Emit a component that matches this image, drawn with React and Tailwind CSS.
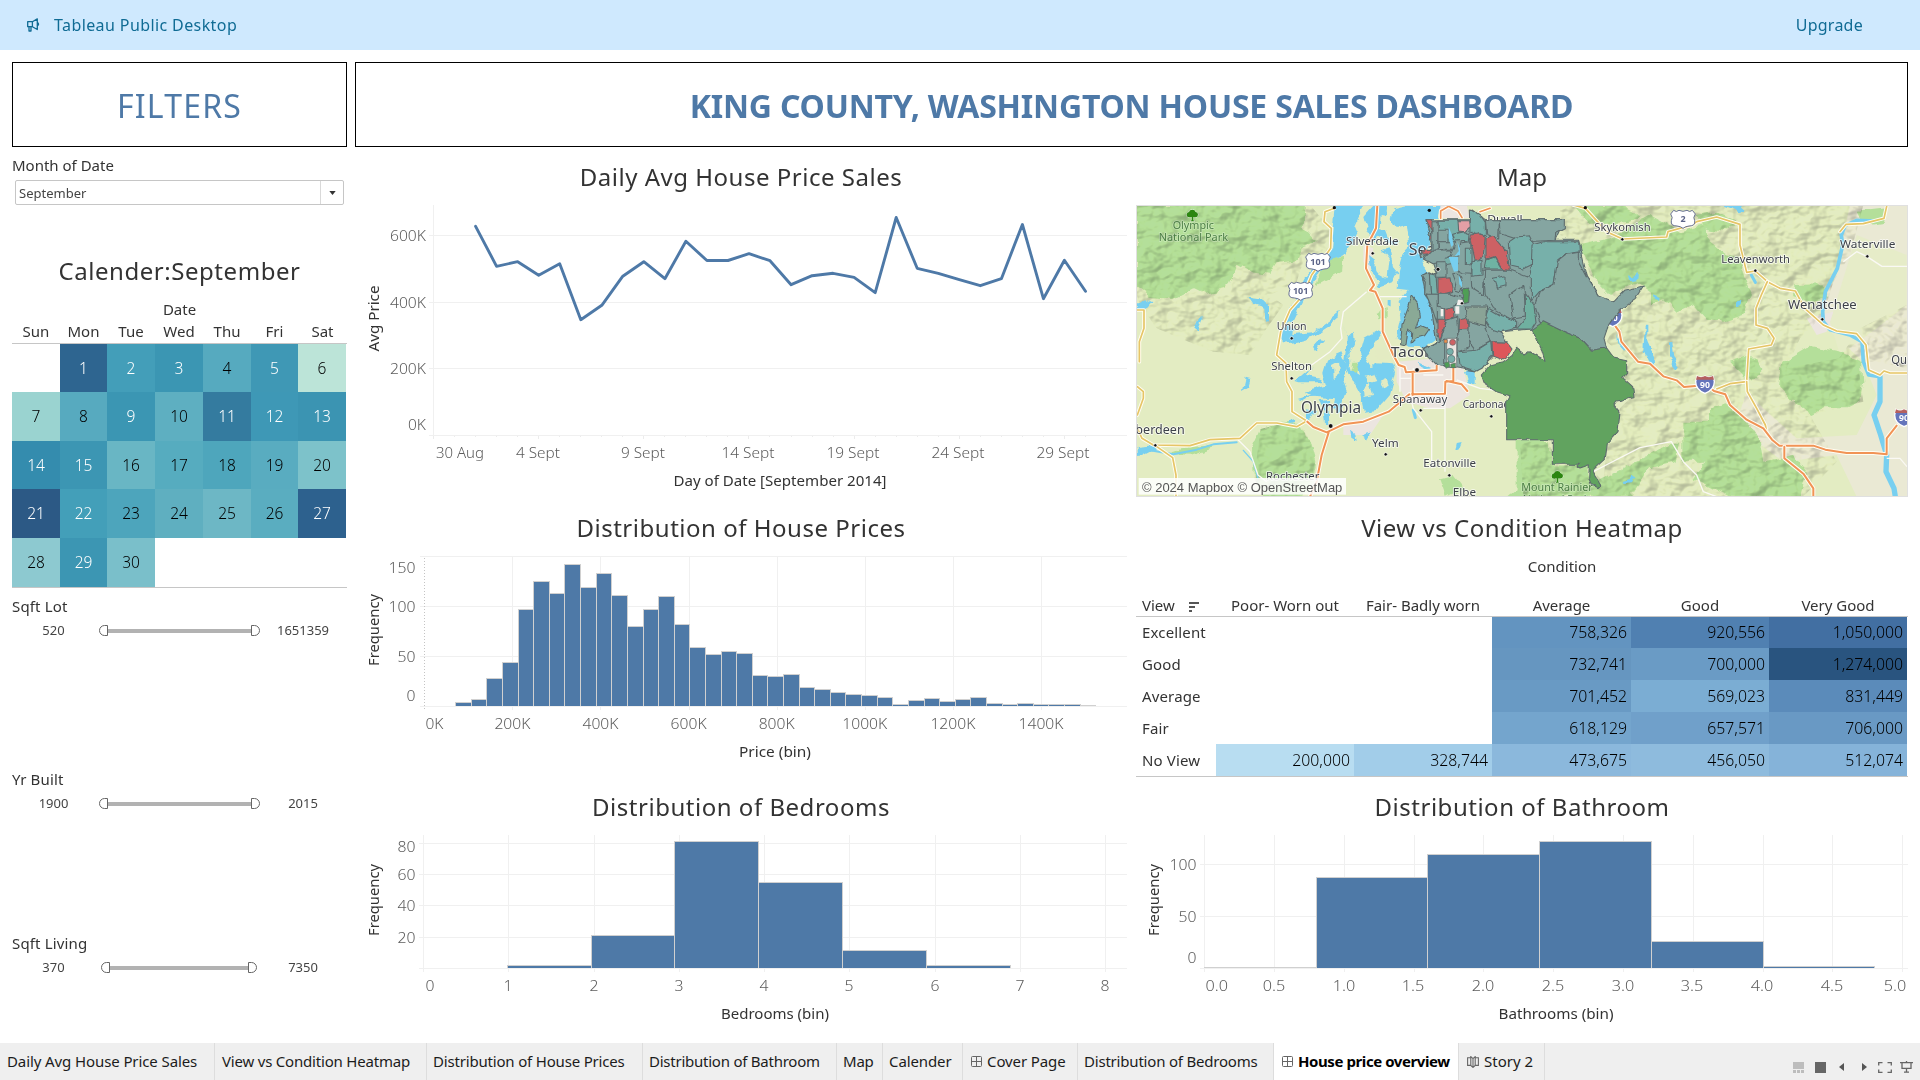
import React from "react";

const WEEKDAYS = ["Sun", "Mon", "Tue", "Wed", "Thu", "Fri", "Sat"];

const DAYS = [
  null,
  [1, "#2e6590", 1], [2, "#439eb9", 1], [3, "#3b96b3", 1], [4, "#56aabf", 0], [5, "#3f98b5", 1], [6, "#bce4d8", 0],
  [7, "#9ad3d0", 0], [8, "#57aabf", 0], [9, "#3b96b3", 1], [10, "#5eafc1", 0], [11, "#347b9f", 1], [12, "#3e98b6", 1], [13, "#3b94b2", 1],
  [14, "#348cae", 1], [15, "#3c96b3", 1], [16, "#69b6c4", 0], [17, "#56acbf", 0], [18, "#4ea6bc", 0], [19, "#59acc0", 0], [20, "#7dc2ca", 0],
  [21, "#2c5985", 1], [22, "#439fb9", 1], [23, "#4da5bc", 0], [24, "#5fafc0", 0], [25, "#6db7c5", 0], [26, "#5aadc0", 0], [27, "#2d618e", 1],
  [28, "#8dc9d0", 0], [29, "#3c96b3", 1], [30, "#7abfca", 0],
];

const HEAT = [
  ["Excellent", null, null, ["758,326", "#6394c0"], ["920,556", "#5080b1"], ["1,050,000", "#426fa2"]],
  ["Good", null, null, ["732,741", "#6696c0"], ["700,000", "#6a9bc5"], ["1,274,000", "#29547f"]],
  ["Average", null, null, ["701,452", "#699ac4"], ["569,023", "#7badd3"], ["831,449", "#5b8bba"]],
  ["Fair", null, null, ["618,129", "#74a5cd"], ["657,571", "#70a0ca"], ["706,000", "#6999c4"]],
  ["No View", ["200,000", "#b8ddf1"], ["328,744", "#a2cde9"], ["473,675", "#8bb8dc"], ["456,050", "#8ebbdd"], ["512,074", "#85b3d9"]],
];

const PRICE_LINE = [
  226.3, 266.3, 261.7, 275.2, 263.7, 319.7, 305.3, 276.2, 261.7, 278.7, 241.3, 260.5, 260.5, 253.7, 260.7, 284.7,
  275.7, 273.3, 277.3, 292.7, 217.5, 268.3, 273.3, 279.7, 285.7, 278.7, 224.5, 298.7, 260.3, 291.3,
];

const PRICE_TOPS = [
  607, 596, 535, 487, 328, 244, 280, 193, 262, 220, 286, 379, 328, 289, 373, 442, 463, 454, 460, 526, 529, 523, 562,
  568, 577, 583, 586, 592, 613, 601, 595, 604, 598, 592, 610, 613, 610, 613, 613, 613, 616,
].map((v) => 500 + v / 3);

const snap = (v) => Math.round(v) + 0.5;

/* ---------- chart primitives ---------- */

function Grid({ xs = [], ys = [], left, right, top, bottom, axisLeft }) {
  return (
    <g stroke="#f0f0f0" strokeWidth="1.4" shapeRendering="crispEdges">
      {ys.map((y) => <line key={"y" + y} x1={left} x2={right} y1={y} y2={y} />)}
      {xs.map((x) => <line key={"x" + x} x1={x} x2={x} y1={top} y2={bottom + 4} />)}
      {axisLeft && <line x1={axisLeft} x2={axisLeft} y1={top} y2={bottom + 4} />}
    </g>
  );
}

function Tick({ x, y, w, anchor = "middle", children }) {
  return (
    <text x={x} y={y} textAnchor={anchor} textLength={w} lengthAdjust="spacingAndGlyphs" className="fill-[#5c5c5c] text-[15px] font-light">
      {children}
    </text>
  );
}

function AxisTitle({ x, y, w, vertical, children }) {
  return (
    <text
      x={x}
      y={y}
      textAnchor="middle"
      textLength={w}
      lengthAdjust="spacingAndGlyphs"
      transform={vertical ? `rotate(-90 ${x} ${y})` : undefined}
      className="fill-[#333333] text-[15px]"
    >
      {children}
    </text>
  );
}

function Bars({ edges, tops, base }) {
  return (
    <g shapeRendering="crispEdges">
      {tops.map((t, i) => {
        const x0 = Math.round(edges[i]);
        const x1 = Math.round(edges[i + 1]);
        const y = Math.round(t);
        return (
          <g key={i}>
            <rect x={x0} y={y} width={x1 - x0 + 1} height={base - y} fill="#d0d0d0" />
            <rect x={x0 + 1} y={y + 1} width={x1 - x0 - 1} height={Math.max(0, base - y - 1)} fill="#4e79a7" />
          </g>
        );
      })}
    </g>
  );
}

function Panel({ title, tracking = "tracking-[0.52px]", children }) {
  return (
    <section className="flex flex-col">
      <h2 className="mb-[7px] flex h-[43px] items-center justify-center whitespace-nowrap text-[24px] leading-[43px] text-[#333333]">
        <span className={tracking}>{title}</span>
      </h2>
      {children}
    </section>
  );
}

/* ---------- charts ---------- */

function DailyPriceChart() {
  const pts = PRICE_LINE.map((y, i) => `${(475.6 + i * 21.03).toFixed(1)},${y}`).join(" ");
  return (
    <svg viewBox="355 205 772 301" className="h-[301px] w-[772px]">
      <Grid left={429} right={1127} top={205} bottom={435} ys={[235.5, 302.5, 368.5, 435.5]} axisLeft={433.5} />
      <g stroke="#ececec" shapeRendering="crispEdges">
        {Array.from({ length: 32 }, (_, i) => {
          const x = snap(433 + i * 21.03);
          return <line key={i} x1={x} x2={x} y1="436" y2={i % 5 === 0 ? 439 : 437} />;
        })}
      </g>
      <polyline points={pts} fill="none" stroke="#4e79a7" strokeWidth="2.9" strokeLinejoin="round" strokeLinecap="round" />
      <Tick x={426} y={240.5} w={36} anchor="end">600K</Tick>
      <Tick x={426} y={307.5} w={36} anchor="end">400K</Tick>
      <Tick x={426} y={373.5} w={36} anchor="end">200K</Tick>
      <Tick x={426} y={430} w={18} anchor="end">0K</Tick>
      <Tick x={460} y={458} w={48}>30 Aug</Tick>
      <Tick x={538} y={458} w={44}>4 Sept</Tick>
      <Tick x={643} y={458} w={44}>9 Sept</Tick>
      <Tick x={748} y={458} w={53}>14 Sept</Tick>
      <Tick x={853} y={458} w={53}>19 Sept</Tick>
      <Tick x={958} y={458} w={53}>24 Sept</Tick>
      <Tick x={1063} y={458} w={53}>29 Sept</Tick>
      <AxisTitle x={780} y={486} w={213}>Day of Date [September 2014]</AxisTitle>
      <AxisTitle x={378.5} y={318.5} w={66} vertical>Avg Price</AxisTitle>
    </svg>
  );
}

function HousePriceHistogram() {
  const edges = Array.from({ length: 42 }, (_, i) => 455.2 + i * 15.61);
  const xs = Array.from({ length: 7 }, (_, i) => snap(512.3 + i * 88.1));
  return (
    <svg viewBox="355 556 772 229" className="h-[229px] w-[772px]">
      <Grid left={420} right={1127} top={556} bottom={706} ys={[556.5, 606.5, 656.5, 706.5]} xs={xs} />
      <line x1="424.5" x2="424.5" y1="558" y2="710" stroke="#c4c4c4" strokeDasharray="1 2" shapeRendering="crispEdges" />
      <Bars edges={edges} tops={PRICE_TOPS} base={706} />
      <Tick x={415.5} y={572.5} w={27} anchor="end">150</Tick>
      <Tick x={415.5} y={611.5} w={27} anchor="end">100</Tick>
      <Tick x={415.5} y={661.5} w={18} anchor="end">50</Tick>
      <Tick x={415.5} y={700.5} w={9} anchor="end">0</Tick>
      <Tick x={434.5} y={728.5} w={18}>0K</Tick>
      {["200K", "400K", "600K", "800K", "1000K", "1200K", "1400K"].map((t, i) => (
        <Tick key={t} x={512.4 + i * 88.1} y={728.5} w={t.length * 9}>{t}</Tick>
      ))}
      <AxisTitle x={775} y={757} w={72}>Price (bin)</AxisTitle>
      <AxisTitle x={378.5} y={630} w={72} vertical>Frequency</AxisTitle>
    </svg>
  );
}

function BedroomHistogram() {
  return (
    <svg viewBox="355 835 772 208" className="h-[208px] w-[772px]">
      <Grid
        left={419}
        right={1127}
        top={835}
        bottom={968}
        ys={[843.5, 874.5, 905.5, 937.5, 968.5]}
        xs={[423.5, 508.5, 594.5, 679.5, 764.5, 849.5, 935.5, 1020.5, 1105.5]}
      />
      <Bars edges={[507.4, 591, 674.4, 758, 842.4, 926.4, 1010.4]} tops={[965, 935, 841, 882, 950, 965]} base={968} />
      {[["80", 852], ["60", 880], ["40", 911], ["20", 943]].map(([t, y]) => (
        <Tick key={t} x={415.5} y={y} w={18} anchor="end">{t}</Tick>
      ))}
      {[430, 508, 594, 679, 764, 849, 935, 1020, 1105].map((x, i) => (
        <Tick key={x} x={x} y={991} w={9}>{i}</Tick>
      ))}
      <AxisTitle x={775} y={1019} w={108}>Bedrooms (bin)</AxisTitle>
      <AxisTitle x={378.5} y={900} w={72} vertical>Frequency</AxisTitle>
    </svg>
  );
}

function BathroomHistogram() {
  const xs = Array.from({ length: 11 }, (_, i) => snap(1204.2 + i * 69.8));
  return (
    <svg viewBox="1136 835 772 208" className="h-[208px] w-[772px]">
      <Grid left={1200} right={1908} top={835} bottom={968} ys={[864.5, 916.5, 968.5]} xs={xs} />
      <Bars edges={[1204.4, 1316, 1427.3, 1539.3, 1651.3, 1763, 1873.6]} tops={[967, 877, 854, 841, 941, 966]} base={968} />
      <Tick x={1196.5} y={869.5} w={27} anchor="end">100</Tick>
      <Tick x={1196.5} y={921.5} w={18} anchor="end">50</Tick>
      <Tick x={1196.5} y={962.5} w={9} anchor="end">0</Tick>
      {[1216.7, 1274, 1344, 1413, 1483, 1553, 1623, 1692, 1762, 1832, 1895].map((x, i) => (
        <Tick key={x} x={x} y={991} w={22.5}>{(i / 2).toFixed(1)}</Tick>
      ))}
      <AxisTitle x={1556} y={1019} w={115}>Bathrooms (bin)</AxisTitle>
      <AxisTitle x={1159} y={900} w={72} vertical>Frequency</AxisTitle>
    </svg>
  );
}

/* ---------- map ---------- */

function Place({ x, y, w, s = 34, dot, color = "#3d4148", halo = "0.8", children }) {
  return (
    <g>
      {dot && <circle cx={dot[0]} cy={dot[1]} r={dot[2] || 5} fill="#111" stroke="#fff" strokeWidth="2" />}
      <text
        x={x}
        y={y}
        textLength={w}
        lengthAdjust="spacingAndGlyphs"
        fontSize={s}
        fill={color}
        stroke="#ffffff"
        strokeOpacity={halo}
        strokeWidth="5"
        strokeLinejoin="round"
        paintOrder="stroke"
      >
        {children}
      </text>
    </g>
  );
}

function Road({ d, color = "#e6c566", w = 5 }) {
  return (
    <g fill="none" strokeLinejoin="round" strokeLinecap="round">
      <path d={d} stroke="#fffdf2" strokeWidth={w + 6} />
      <path d={d} stroke={color} strokeWidth={w} />
    </g>
  );
}

function UsShield({ x, y, n }) {
  return (
    <g transform={`translate(${x} ${y})`}>
      <path d="M-28-25Q-20-18-12-25Q0-19 12-25Q20-18 28-25L37-14Q29-3 35 6Q38 22 18 22Q7 23 0 29Q-7 23-18 22Q-38 22-35 6Q-29-3-37-14Z" fill="#fff" stroke="#6a7394" strokeWidth="3" />
      <text y="11" textAnchor="middle" fontSize="27" fontWeight="700" fill="#5c6488">{n}</text>
    </g>
  );
}

function Interstate({ x, y }) {
  return (
    <g transform={`translate(${x} ${y})`}>
      <path d="M-24-23Q-12-16 0-23Q12-16 24-23L28-6Q28 18 0 29Q-28 18-28-6Z" fill="#6474bb" stroke="#fff" strokeWidth="4" />
      <path d="M-24-23Q-12-16 0-23Q12-16 24-23L27-12H-27Z" fill="#b5605f" />
      <text y="13" textAnchor="middle" fontSize="26" fontWeight="700" fill="#fff">90</text>
    </g>
  );
}

function Tree({ x, y }) {
  return (
    <path
      transform={`translate(${x} ${y})`}
      d="M-2 14V4Q-18 8-17-4Q-16-10-10-11Q-8-18 0-18Q8-18 10-11Q17-10 17-3Q16 7 3 4V14L7 17H-6Z"
      fill="#2c8610"
      stroke="#fff"
      strokeWidth="2"
      paintOrder="stroke"
    />
  );
}

const WATER = [
  "M618 30H700L672 95L682 118L648 178L604 196L566 232L522 316L490 380L468 388L478 342L528 246L572 196L606 168L612 90Z",
  "M456 400L472 386L492 400L490 420L545 415L596 380L632 350L628 368L592 398L545 428L500 440L458 446Z",
  "M700 66L732 30H772L768 62L752 60L748 112L736 140L724 118L712 112Z",
  "M790 40L835 30H932L925 72H890L905 150L870 180L900 240L880 260L906 322L922 360L922 430L885 457L832 455L800 430L812 380L806 322L830 288L800 284L804 222L818 176L838 150L830 88L800 96L785 70Z",
  "M714 180L732 194L736 226L770 246L776 190L758 166L776 160L786 214L802 232L786 262L748 275L738 268L752 256L722 230Z",
  "M738 98L768 108L776 128L806 140L796 150L760 134L742 120Z",
  "M640 390L654 420L650 468L646 500L664 550L690 596L702 650L742 645L780 600L798 532L788 505L740 502L722 520L704 490L735 445L758 412L744 406L704 428L692 470L680 500L690 540L664 524L658 480L674 440L672 410L656 425Z",
  "M634 472L594 490L580 536L592 572L520 590L560 606L612 610L608 640L622 656L636 640L652 590L640 560L652 516Z",
  "M496 558L545 515L528 542L576 552L584 562L508 562Z",
  "M500 612L560 594L610 594L600 604L540 606L520 618Z",
  "M566 616L594 612L598 690H588L584 650Z",
  "M530 640L556 645L540 670L526 676Z",
  "M552 452L570 432L588 436L570 452L560 466Z",
  "M358 308L402 314L420 332V378L408 380L406 338L370 326Z",
  "M212 364L218 372L204 406L196 402Z",
  "M20 326L48 310L70 322L52 342L20 346Z",
  "M20 756L60 752L82 762L40 784L20 786Z",
  "M1002 530L1020 520L1034 534V566L1014 570Z",
  "M660 704L676 716L680 738L664 728Z",
  "M690 720L722 712L708 734Z",
  "M980 742L998 738L990 758L976 764Z",
  "M474 682L496 674L494 688L476 690Z",
  "M864 500L905 520L900 528L866 512Z",
  "M770 312H782V334H770Z",
  "M1544 392H1552L1552 440L1574 488L1576 516L1558 510L1540 470Z",
  "M1614 444L1624 440L1630 486L1650 514L1642 524L1614 486Z",
  "M1780 30H1830L1848 46L1830 52Z",
  "M1478 858L1496 852L1508 838L1516 842L1506 862L1480 864Z",
  "M1462 420L1470 440L1490 458L1482 464L1464 444Z",
  "M1572 298L1592 306L1590 314L1574 308Z",
  "M1494 238L1510 244L1524 234L1522 252L1498 256Z",
  "M1818 322L1834 318L1832 328L1818 330Z",
  "M344 548L358 552L350 580L336 588Z",
];

const FORESTS = [
  "M18 30H528L520 96L560 140L512 160L500 196L440 204L418 240L368 232L322 206L290 280L230 296L196 280L132 312L60 306L18 276Z",
  "M392 702L456 686L512 690L540 740L556 800L545 850L520 905H400L372 850L366 762Z",
  "M150 760L230 752L250 760L180 782L120 780Z",
  "M1350 150L1440 130L1560 60L1650 110L1720 90L1740 140L1790 180L1830 190L1846 250L1866 300L1840 360L1780 380L1730 374L1690 330L1640 350L1600 310L1560 330L1560 290L1520 260L1440 300L1400 260L1380 210Z",
  "M1960 500L2040 452L2130 470L2196 500L2200 560L2190 620L2150 640L2090 640L2050 660L1990 620L1950 580Z",
  "M1740 640L1790 625L1860 690L1890 740L1900 800L1990 780L2030 830L2010 905H1800L1690 850L1740 780Z",
  "M1160 735H1262L1268 808L1370 810L1380 870L1420 850L1540 790L1620 740L1650 740L1640 800L1560 820L1500 905H1130L1160 880Z",
  "M1330 30H1470L1530 60L1500 80L1380 90Z",
  "M670 500L690 500L680 540L664 530Z",
  "M740 350L770 340V370L745 376Z",
  "M1990 270L2080 268L2090 310L2040 320L1990 300Z",
  "M1660 680H1740V800H1660Z",
  "M2180 50L2270 40L2262 80L2200 90Z",
  "M930 850L970 840L1000 880L950 905Z",
  "M580 192L640 186L636 230L560 270Z",
  "M1700 60L1760 50L1820 80L1780 110L1720 100Z",
  "M1800 500L1860 480L1900 520L1860 560Z",
];

const RIDGES = [
  "M18 30H540L600 100L590 180L520 200L500 260L420 300L460 330L410 400L360 480L250 470L150 430L80 400L30 330L18 290Z",
  "M1290 30H2200L2160 180L2110 260L2080 360L2010 430L1970 520L2180 480L2200 620L2040 660L2120 800L2020 905H1180L1170 740H1262L1268 808L1370 808L1420 860L1430 760L1470 640L1510 600L1480 540L1490 490L1430 440L1480 340L1540 280L1460 310L1380 240L1350 140L1290 120Z",
  "M2120 500L2190 400L2330 330V520L2240 500Z",
  "M392 702L456 686L512 690L540 740L556 800L545 850L520 905H400L372 850Z",
];

const TEAL = "#77b0aa";
const GREY = "#85a5a1";
const RED = "#cd6164";

const ZIPS = [
  [TEAL, "M924 76H985L990 110L968 120L976 142L940 140L924 130Z"],
  [RED, "M888 74H908V132L898 138L906 110Z"],
  ["#e59fa5", "M984 77H1016L1018 98L1004 110L986 108Z"],
  [TEAL, "M1018 42L1054 64L1066 82L1066 118L1048 124L1020 110Z"],
  [TEAL, "M968 118L1004 110L1020 116L1018 136L974 138Z"],
  [GREY, "M1066 74H1108L1106 132L1070 118Z"],
  [GREY, "M1108 74H1303V98L1277 112L1275 136L1186 140L1110 116Z"],
  [RED, "M1024 120L1050 116L1066 124L1060 182L1036 202L1028 160L1020 140Z"],
  [RED, "M1068 132L1090 124L1110 148L1132 168L1138 228L1118 222L1092 182L1068 190Z"],
  [TEAL, "M1138 140L1158 126L1198 122L1212 150L1208 208L1178 222L1142 214Z"],
  ["#6fb3a3", "M1070 192L1092 184L1116 222L1066 222Z"],
  [TEAL, "M1206 150L1240 140H1346L1348 170L1310 176L1284 196L1272 270L1226 292L1200 322L1190 270L1204 220Z"],
  [GREY, "M1348 172V200L1372 246L1410 304L1452 320L1484 286L1540 273L1516 310L1468 346L1432 400L1422 430L1430 460L1388 466L1354 432L1288 404L1230 382L1214 330L1228 292L1272 268L1282 200L1310 178Z"],
  [GREY, "M1060 226L1140 226L1204 250L1204 318L1150 378L1090 340L1066 300Z"],
  [TEAL, "M1090 250L1128 242V272L1100 280Z"],
  ["#6fb0a0", "M1186 292L1212 330L1218 380L1204 402H1160L1186 370Z"],
  [GREY, "M1140 300L1182 270L1186 366L1150 372Z"],
  [TEAL, "M1076 340L1110 360L1160 378L1160 400L1110 410L1078 400L1062 376Z"],
  ["#8aa396", "M1006 336L1070 336L1066 392L1018 384L1008 360Z"],
  [GREY, "M1020 226L1064 226L1060 300L1022 276Z"],
  [GREY, "M990 144L1022 140L1026 238L994 236L976 206Z"],
  [TEAL, "M1006 160H1026V206H1006Z"],
  [TEAL, "M1026 200L1056 196L1056 240L1026 244Z"],
  [GREY, "M906 80H924V160L872 188L870 178L906 160Z"],
  [GREY, "M924 106H954V140H924Z"],
  [GREY, "M924 140H976L970 162L926 164Z"],
  [RED, "M872 178L890 162L908 166L906 176Z"],
  [GREY, "M906 166L968 164L950 200L906 206L880 192Z"],
  [TEAL, "M946 190L976 186L984 206L948 212Z"],
  [GREY, "M874 240L898 230L902 300L884 296L886 262Z"],
  [TEAL, "M898 236L918 240L922 298L902 298Z"],
  [GREY, "M920 200H948V250H920Z"],
  [RED, "M924 252L960 248L968 292L944 300L924 296Z"],
  [GREY, "M888 298H922V386L906 340Z"],
  [GREY, "M922 298H966L1000 310L980 330L944 342L922 336Z"],
  ["#4f9e55", "M998 282L1012 276L1018 290L1016 322L1002 326L996 300Z"],
  [GREY, "M968 236L984 234L998 262L992 290L974 284L978 262Z"],
  [RED, "M944 340L970 338L972 366L944 374Z"],
  [RED, "M924 376H950L930 434L924 420Z"],
  [RED, "M986 374L1014 370L1018 402L984 404Z"],
  [GREY, "M950 376L980 366L984 432L930 438Z"],
  [GREY, "M984 404H1018L1016 458L984 470Z"],
  [GREY, "M1018 380L1066 392L1080 440L1036 466L1016 440Z"],
  [TEAL, "M984 470L1040 466L1082 440L1086 480L1056 520L1040 528L990 512Z"],
  [GREY, "M876 462L944 432V512L922 508Z"],
  ["#dd565a", "M1086 440L1130 442L1146 462L1132 484L1116 494L1088 484Z"],
];

function KingCountyMap() {
  return (
    <div className="h-[292px] w-[772px] overflow-hidden border border-[#e0e0e0]">
      <svg viewBox="21 33 2310 870" className="block h-[290px] w-[770px] font-['Noto_Sans','Open_Sans',sans-serif]">
        <defs>
          <filter id="hillshade" x="0" y="0" width="100%" height="100%" colorInterpolationFilters="sRGB">
            <feTurbulence type="fractalNoise" baseFrequency="0.016 0.021" numOctaves="3" seed="11" result="n" />
            <feDiffuseLighting in="n" surfaceScale="26" diffuseConstant="1.2" lightingColor="#fdffdc" result="l">
              <feDistantLight azimuth="225" elevation="55" />
            </feDiffuseLighting>
            <feComposite in="l" in2="SourceAlpha" operator="in" />
          </filter>
          <filter id="ragged" x="-5%" y="-5%" width="110%" height="110%" colorInterpolationFilters="sRGB">
            <feTurbulence type="fractalNoise" baseFrequency="0.03" numOctaves="2" seed="4" result="t" />
            <feDisplacementMap in="SourceGraphic" in2="t" scale="24" xChannelSelector="R" yChannelSelector="G" />
          </filter>
          <filter id="borders" x="-2%" y="-2%" width="104%" height="104%" colorInterpolationFilters="sRGB">
            <feTurbulence type="fractalNoise" baseFrequency="0.035" numOctaves="2" seed="7" result="t" />
            <feDisplacementMap in="SourceGraphic" in2="t" scale="14" xChannelSelector="R" yChannelSelector="G" />
          </filter>
        </defs>
        <rect x="0" y="0" width="2400" height="960" fill="#e3ecc2" />
        <path d="M2160 30H2334V905H2180L2120 780L1960 800L1880 740L1820 680L1850 590L1900 640L2000 730L2180 720L2240 600L2200 500L2090 400L2060 320L2110 260Z" fill="#eae9d4" />
        <path d="M2180 120L2330 180V330L2240 400L2130 480L2100 380Z" fill="#e6ecc8" />
        <path d="M800 500L920 490L1000 520L1020 600L960 640L900 640L830 620L800 560ZM930 30H1010L1020 70H930ZM640 680L760 660L720 720L640 720ZM700 150L730 160L720 230L700 200ZM2030 370L2110 350L2090 410L2060 420Z" fill="#ece5e0" />
        <g fill="#b4df9a" filter="url(#ragged)">
          {FORESTS.map((d, i) => <path key={i} d={d} />)}
        </g>
        <g filter="url(#hillshade)" className="opacity-[0.22] mix-blend-multiply">
          {RIDGES.map((d, i) => <path key={i} d={d} />)}
        </g>
        <g fill="#77cff0" filter="url(#ragged)">
          {WATER.map((d, i) => <path key={i} d={d} />)}
        </g>
        <g fill="#e3ebc2" filter="url(#ragged)">
          <path d="M742 455L764 462L784 480L758 496L738 484Z" />
          <path d="M704 545L732 538L742 558L716 566Z" />
          <path d="M702 580L722 570L732 600L704 606Z" />
          <path d="M752 560L770 552L776 572L760 580Z" />
          <path d="M606 510L624 500L628 540L608 556Z" />
        </g>
        <g fill="none" stroke="#77cff0" strokeLinejoin="round" strokeLinecap="round">
          <path d="M2232 78L2180 76L2145 92L2134 120L2138 150L2122 220L2086 290L2078 350L2080 380L2100 404L2160 420L2196 440L2200 500L2216 540L2250 545" strokeWidth="11" />
          <path d="M2250 545V620L2232 660L2252 720L2270 780L2268 830L2292 880L2296 905" strokeWidth="16" />
          <path d="M60 766L130 778L200 764L250 748L320 742" strokeWidth="6" />
          <path d="M340 766L370 800L384 850" strokeWidth="4" />
          <path d="M1864 240L1876 262M850 645L856 668" strokeWidth="9" />
        </g>
        <g fill="none" stroke="#faf9f4" strokeWidth="4" strokeLinejoin="round">
          <path d="M710 290L640 350L632 400L636 430L600 470L545 510" />
          <path d="M324 734L360 770L384 840L410 860" />
          <path d="M840 600L850 640L905 710V820" />
          <path d="M945 595V830M810 520V590M850 520V600M880 540H940M810 550H850M880 640H945" />
          <path d="M750 305H830M980 555L1050 580L1130 590" />
          <path d="M2140 200L2180 170L2210 184L2256 214H2331" />
          <path d="M1390 830L1440 804L1530 758L1624 740L1660 800L1700 840L1720 890L1760 905" />
          <path d="M2270 790L2310 790L2331 815" />
        </g>
        <Road d="M613 40L585 50L582 80L604 100L602 160L545 240L520 300L480 345L452 410L440 480L468 505L470 560L486 590V650L530 678L500 695L440 684L380 684L330 730L240 734L180 752L70 750L36 730L22 700" />
        <Road d="M22 345H42V400L28 440V500M22 575L40 590V610L22 660M76 752L128 788L138 840V905" />
        <Road color="#f19355" w={6} d="M742 30L738 100L712 150L708 220L732 270L720 286L736 290L758 340V410L790 480L806 510L824 516L828 532L920 526V512M848 532V600M838 598L945 596L946 560L970 558V520M950 558L995 568L1012 588" />
        <Road color="#f19355" w={6} d="M838 598L776 650L700 680L640 688L590 712L550 696L532 680M596 712L575 780L560 860L540 905" />
        <Road color="#f19355" w={5} d="M932 70V48L956 34L984 48L996 68M918 240L922 262M950 234H990M1050 50L1080 40" />
        <Road d="M1330 30L1366 40L1430 110L1478 132L1610 126L1614 110L1686 90L1700 80L1760 66L1830 88V150L1850 232L1876 228L1912 260L1950 280L1996 288L2024 340L2080 390L2120 408L2180 416L2208 450L2216 525L2250 540L2262 528L2280 534H2331" />
        <Road d="M1912 260L1894 300L1878 340V390L1912 400L1932 430L1924 450L1856 462L1850 560L1800 566L1760 582" />
        <Road d="M1850 560L1852 590L1880 640L1906 690L1912 720" />
        <Road d="M2130 110L2148 88L2200 86L2262 70L2270 34" />
        <Road color="#f19355" w={6} d="M1450 385L1468 410L1474 440L1524 500L1560 506L1600 544L1640 556L1662 576L1730 570L1752 588L1786 598L1800 630L1850 674L1900 700L1926 734L1948 752H2050L2086 764L2150 774H2230L2270 778V730L2300 692" />
        <Road color="#f19355" w={6} d="M1963 755V790L2020 836L2050 880V905" />
        <Interstate x={1448} y={366} />
        <Interstate x={1725} y={566} />
        <Interstate x={2322} y={666} />
        <UsShield x={564} y={200} n="101" />
        <UsShield x={512} y={287} n="101" />
        <UsShield x={1659} y={71} n="2" />
        <Place x={1072} y={84} w={106}>Duvall</Place>
        <Place x={836} y={180} w={154} s={48}>Seattle</Place>
        <Place x={782} y={486} w={170} s={44} dot={[861, 525, 7]}>Tacoma</Place>
        <Place x={998} y={640} w={160} dot={[1084, 664]}>Carbonado</Place>
        <g stroke="#5d6b6d" strokeWidth="3.2" strokeLinejoin="round" filter="url(#borders)">
          <path d="M888 74H1018L1022 42L1066 74H1303L1275 136H1346L1372 246L1410 304L1290 404L1204 402L1110 410L1130 442L1086 440V490L1040 528L944 514L876 462L920 440L904 340L886 296L876 240L900 230L920 240L906 200L870 180L906 160Z" fill={GREY} />
          {ZIPS.map(([c, d], i) => <path key={i} d={d} fill={c} />)}
          <path d="M846 302L862 322L868 370L856 400L874 392L898 402L884 422L862 428L846 444L848 412L834 402L828 450L812 446L816 388L834 340Z" fill="#8aa996" />
          <path d="M1054 540L1080 510L1120 500L1146 482L1160 460L1185 480L1200 470L1245 496L1236 466L1206 404L1240 380L1290 405L1355 432L1385 466L1430 459L1450 486L1490 494V535L1478 548L1508 575L1512 608L1460 618L1452 630L1470 652L1464 710L1432 745L1426 790L1388 826L1395 840L1412 868L1404 878L1384 868L1376 850L1378 812L1350 822L1338 816L1348 808H1267V734H1130V620L1140 602L1100 590L1062 565Z" fill="#61a35f" />
        </g>
        <g stroke="#5d6b6d" strokeWidth="2">
          <path d="M950 430H980V516H950Z" fill="#ece5e0" />
          <circle cx="960" cy="470" r="10" fill={TEAL} />
          <circle cx="964" cy="492" r="11" fill={TEAL} />
          <circle cx="968" cy="442" r="9" fill={RED} />
          <path d="M942 504L956 500L960 514L948 520ZM962 508L976 504V518H964Z" fill="#4f9e55" />
          <path d="M942 434H952V444H942Z" fill="#ef8f4b" />
        </g>
        <path d="M956 96L966 120L970 150L964 156L956 130ZM982 140L990 160V180L974 184L986 168ZM956 186H984V228L972 230ZM986 240L996 262V278L988 268Z" fill="#77cff0" />
        <path d="M932 342H940V364H932ZM976 334H988V356H976ZM984 314H998V330H980Z" fill="#f3efec" />
        <circle cx="996" cy="325" r="5" fill="#111" stroke="#fff" strokeWidth="2" />
        <circle cx="924" cy="223" r="6" fill="#111" stroke="#fff" strokeWidth="2" />
        <Place x={648} y={150} w={158} dot={[728, 175]}>Silverdale</Place>
        <Place x={440} y={406} w={90} dot={[485, 430]}>Union</Place>
        <Place x={424} y={525} w={122} dot={[485, 550]}>Shelton</Place>
        <Place x={513} y={654} w={180} s={46} dot={[602, 693, 7]}>Olympia</Place>
        <Place x={788} y={624} w={164} dot={[872, 646]}>Spanaway</Place>
        <Place x={726} y={755} w={80} dot={[767, 778]}>Yelm</Place>
        <Place x={880} y={815} w={158} dot={[958, 841]}>Eatonville</Place>
        <Place x={968} y={902} w={70}>Elbe</Place>
        <Place x={-8} y={718} w={172} s={38} dot={[76, 751]}>Aberdeen</Place>
        <Place x={408} y={854} w={160}>Rochester</Place>
        <Place x={1393} y={108} w={169} dot={[1477, 133]}>Skykomish</Place>
        <Place x={1774} y={203} w={206} dot={[1876, 227]}>Leavenworth</Place>
        <Place x={2130} y={160} w={166} dot={[2212, 184]}>Waterville</Place>
        <Place x={1974} y={342} w={206} s={38} dot={[2077, 373]}>Wenatchee</Place>
        <Place x={2284} y={508} w={110} s={36}>Quincy</Place>
        <circle cx="613" cy="38" r="5" fill="#111" />
        <circle cx="898" cy="46" r="5" fill="#111" />
        <circle cx="1366" cy="38" r="5" fill="#111" />
        <Tree x={187} y={62} />
        <Place x={128} y={101} w={124} color="#4c7f45" halo="0.3">Olympic</Place>
        <Place x={86} y={137} w={208} color="#4c7f45" halo="0.3">National Park</Place>
        <Tree x={1282} y={846} />
        <Place x={1174} y={887} w={214} s={32} color="#4c7f45" halo="0.3">Mount Rainier</Place>
        <Place x={1178} y={925} w={200} s={32} color="#4c7f45" halo="0.3">National Park</Place>
        <rect x="26" y="849" width="622" height="50" fill="#fff" fillOpacity="0.86" />
        <text x="36" y="891" textLength="601" lengthAdjust="spacingAndGlyphs" fontSize="39" fill="#555" className="font-['Liberation_Sans',sans-serif]">
          © 2024 Mapbox © OpenStreetMap
        </text>
      </svg>
    </div>
  );
}

/* ---------- heatmap ---------- */

function ConditionHeatmap() {
  return (
    <div className="flex h-[229px] w-[772px] flex-col text-[15px] text-[#333333]">
      <div className="flex h-[36px] pl-[80px] leading-[20px]">
        <span className="w-[692px] text-center">Condition</span>
      </div>
      <div className="grid h-[25px] grid-cols-[80px_138px_138px_139px_138px_138px] border-b border-[#c6c6c6] text-center leading-[26px]">
        <div className="flex items-center gap-[14px] pl-[6px]">
          <span>View</span>
          <svg viewBox="0 0 10 10" className="mt-[3px] h-[10px] w-[10px] fill-[#555555]">
            <path d="M0 0h10v2H0zM0 4h6v2H0zM0 8h3v2H0z" />
          </svg>
        </div>
        <span className="whitespace-nowrap">Poor- Worn out</span>
        <span className="whitespace-nowrap">Fair- Badly worn</span>
        <span>Average</span>
        <span>Good</span>
        <span>Very Good</span>
      </div>
      <div className="border-b border-[#c6c6c6]">
        {HEAT.map(([label, ...cells], r) => (
          <div
            key={label}
            className={"grid grid-cols-[80px_138px_138px_139px_138px_138px] " + (r === 0 ? "h-[31px] leading-[31px]" : "h-8 leading-8")}
          >
            <span className="pl-[6px] tracking-[0.15px]">{label}</span>
            {cells.map((c, i) => (
              <span
                key={i}
                className="pr-[4px] text-right text-[15.8px] font-light text-black"
                style={{ backgroundColor: c ? c[1] : "transparent" }}
              >
                {c ? c[0] : ""}
              </span>
            ))}
          </div>
        ))}
      </div>
    </div>
  );
}

/* ---------- filters ---------- */

function RangeFilter({ label, min, max, inset, className }) {
  return (
    <div className={"pt-[7px] " + className}>
      <div className="text-[15px] leading-[22px] tracking-[0.15px] text-[#333333]">{label}</div>
      <div className="flex h-[27px] items-center text-[13px] text-[#444444]">
        <span className="w-[83px] text-center">{min}</span>
        <div className={"ml-px flex w-[167px] items-center " + inset}>
          <span className="h-[11px] w-[9px] shrink-0 rounded-l-full border border-[#666666] bg-white" />
          <span className="h-1 flex-1 bg-[#b2b2b2]" />
          <span className="h-[11px] w-[9px] shrink-0 rounded-r-full border border-[#666666] bg-white" />
        </div>
        <span className="w-[80px] text-center">{max}</span>
      </div>
    </div>
  );
}

function Filters() {
  return (
    <aside className="flex w-[335px] flex-col">
      <div className="flex h-[85px] items-center justify-center border border-black text-[32px] tracking-[1.2px] text-[#4e79a7]">
        <span className="mt-[2px]">FILTERS</span>
      </div>
      <div className="h-[33px] pt-[3px] text-[15px] leading-[30px] text-[#333333]">Month of Date</div>
      <div className="ml-[3px] flex h-[25px] w-[329px] rounded-[2px] border border-[#c6c6c6]">
        <span className="flex-1 pl-[3px] text-[13px] leading-[25px] text-[#444444]">September</span>
        <span className="flex w-[23px] items-center justify-center border-l border-[#d9d9d9]">
          <svg viewBox="0 0 8 5" className="h-[4px] w-[7px] fill-[#333333]"><path d="M0 0h8L4 5z" /></svg>
        </span>
      </div>
      <h2 className="mt-[48px] text-center text-[24px] leading-9 tracking-[0.55px] text-[#333333]">Calender:September</h2>
      <div className="mt-[9px] text-center text-[15px] leading-[22px] text-[#333333]">Date</div>
      <div className="grid h-[24px] grid-cols-[48px_47px_48px_48px_48px_47px_49px] border-b border-[#c6c6c6] text-center text-[15px] leading-[22px] text-[#333333]">
        {WEEKDAYS.map((d) => <span key={d}>{d}</span>)}
      </div>
      <div className="grid grid-cols-[48px_47px_48px_48px_48px_47px_48px] grid-rows-[48px_49px_48px_49px_49px] border-b border-[#c6c6c6]">
        {DAYS.map((d, i) =>
          d ? (
            <span
              key={i}
              className={"flex items-center justify-center pt-px text-[15.5px] font-light " + (d[2] ? "text-white" : "text-black")}
              style={{ backgroundColor: d[1] }}
            >
              {d[0]}
            </span>
          ) : (
            <span key={i} />
          )
        )}
      </div>
      <RangeFilter label="Sqft Lot" min="520" max="1651359" inset="pl-[3px] pr-[3px]" className="h-[173px]" />
      <RangeFilter label="Yr Built" min="1900" max="2015" inset="pl-[3px] pr-[3px]" className="h-[164px]" />
      <RangeFilter label="Sqft Living" min="370" max="7350" inset="pl-[5px] pr-[6px]" className="h-[100px]" />
    </aside>
  );
}

/* ---------- sheet tabs ---------- */

function DashboardIcon() {
  return (
    <svg viewBox="0 0 11 11" className="h-[11px] w-[11px] shrink-0" fill="none" stroke="#666666">
      <rect x="0.5" y="0.5" width="10" height="10" rx="1" />
      <path d="M5.5 0.5v10M0.5 5.5h10" />
    </svg>
  );
}

function StoryIcon() {
  return (
    <svg viewBox="0 0 12 12" className="h-[12px] w-[12px] shrink-0" fill="none" stroke="#666666" strokeWidth="1.1">
      <path d="M6 2.6V11.4M6 2.6L3.8 0.6V9.4L6 11.4L8.2 9.4V0.6L6 2.6M3.8 1.8H0.6V9.4H3.8M8.2 1.8H11.4V9.4H8.2" />
    </svg>
  );
}

const TABS = [
  ["Daily Avg House Price Sales", "w-[215px] pl-[7px] tracking-[-0.1px]"],
  ["View vs Condition Heatmap", "w-[212px] pl-[7px] tracking-[-0.2px]"],
  ["Distribution of House Prices", "w-[216px] pl-[6px] tracking-[-0.18px]"],
  ["Distribution of Bathroom", "w-[194px] pl-[6px] tracking-[-0.24px]"],
  ["Map", "w-[46px] pl-[6px] tracking-[-0.2px]"],
  ["Calender", "w-[80px] pl-[6px] tracking-[-0.1px]"],
  ["Cover Page", "w-[115px] pl-[8px] tracking-[-0.1px]", "dash"],
  ["Distribution of Bedrooms", "w-[196px] pl-[6px] tracking-[-0.2px]"],
  ["House price overview", "w-[185px] pl-[8px] tracking-[-0.42px]", "dash", true],
  ["Story 2", "w-[86px] pl-[8px]", "story"],
];

function SheetTabs() {
  return (
    <footer className="flex h-[37px] bg-[#efefef] text-[15px] text-[#1c1c1c]">
      {TABS.map(([name, cls, icon, active]) => (
        <div
          key={name}
          className={
            "flex shrink-0 items-center gap-[5px] whitespace-nowrap border-r border-[#dddddd] " +
            cls +
            (active ? " bg-white font-bold text-black" : "")
          }
        >
          {icon === "dash" && <DashboardIcon />}
          {icon === "story" && <StoryIcon />}
          <span>{name}</span>
        </div>
      ))}
      <div className="ml-auto mr-[7px] mt-[13px] flex h-[22px] items-center">
        <svg viewBox="0 0 11 11" className="mr-[11px] h-[11px] w-[11px] fill-[#bdbdbd]">
          <path d="M0 0h11v7H0zM0 8h3v3H0zM4 8h3v3H4zM8 8h3v3H8z" />
        </svg>
        <svg viewBox="0 0 11 11" className="mr-[13px] h-[11px] w-[11px] fill-[#666666]"><path d="M0 0h11v11H0z" /></svg>
        <svg viewBox="0 0 5 8" className="mr-[18px] h-[8px] w-[5px] fill-[#555555]"><path d="M5 0v8L0 4z" /></svg>
        <svg viewBox="0 0 5 8" className="mr-[11px] h-[8px] w-[5px] fill-[#555555]"><path d="M0 0v8l5-4z" /></svg>
        <svg viewBox="0 0 14 11" className="mr-[8px] h-[11px] w-[14px]" fill="none" stroke="#666666" strokeWidth="1.3">
          <path d="M0.7 3.5V0.7H4.5M9.5 0.7H13.3V3.5M13.3 7.5V10.3H9.5M4.5 10.3H0.7V7.5" />
        </svg>
        <svg viewBox="0 0 13 12" className="h-[12px] w-[13px]" fill="none" stroke="#666666" strokeWidth="1.3">
          <path d="M0 1.6H13M2 1.6V7.4H11V1.6M6.5 7.4V11M4 11.2H9M6.5 0V1.6" />
        </svg>
      </div>
    </footer>
  );
}

export default function App() {
  return (
    <div className="flex h-[1080px] w-[1920px] flex-col overflow-hidden bg-white font-['Noto_Sans','Open_Sans',sans-serif]">
      <header className="flex h-[50px] shrink-0 items-center bg-[#cfe9fe] text-[16px] tracking-[0.4px] text-[#0f6b94]">
        <svg viewBox="0 0 13 14" className="ml-[27px] mr-[14px] h-[14px] w-[13px]" fill="none" stroke="#0f6b94" strokeWidth="1.3" strokeLinejoin="round">
          <path d="M0.7 3.7H5.4V8.7H0.7ZM5.4 3.7L10.3 0.9V11.5L5.4 8.7M2 8.9V13H4V8.9M10.5 4.6Q12.6 6.2 10.5 7.8" />
        </svg>
        <span>Tableau Public Desktop</span>
        <span className="ml-auto mr-[57px] tracking-[0.25px]">Upgrade</span>
      </header>

      <main className="flex h-[993px] shrink-0 gap-2 pl-3 pt-3">
        <Filters />
        <div className="flex w-[1553px] flex-col">
          <div className="flex h-[85px] items-center justify-center border border-black text-[32px] font-bold tracking-[-0.2px] text-[#4e79a7]">
            <h1 className="mt-[2px] whitespace-nowrap">KING COUNTY, WASHINGTON HOUSE SALES DASHBOARD</h1>
          </div>
          <div className="mt-2 grid grid-cols-[772px_772px] grid-rows-[351px_279px_258px] gap-x-[9px]">
            <Panel title="Daily Avg House Price Sales"><DailyPriceChart /></Panel>
            <Panel title="Map" tracking="tracking-normal"><KingCountyMap /></Panel>
            <Panel title="Distribution of House Prices"><HousePriceHistogram /></Panel>
            <Panel title="View vs Condition Heatmap"><ConditionHeatmap /></Panel>
            <Panel title="Distribution of Bedrooms"><BedroomHistogram /></Panel>
            <Panel title="Distribution of Bathroom"><BathroomHistogram /></Panel>
          </div>
        </div>
      </main>

      <SheetTabs />
    </div>
  );
}
